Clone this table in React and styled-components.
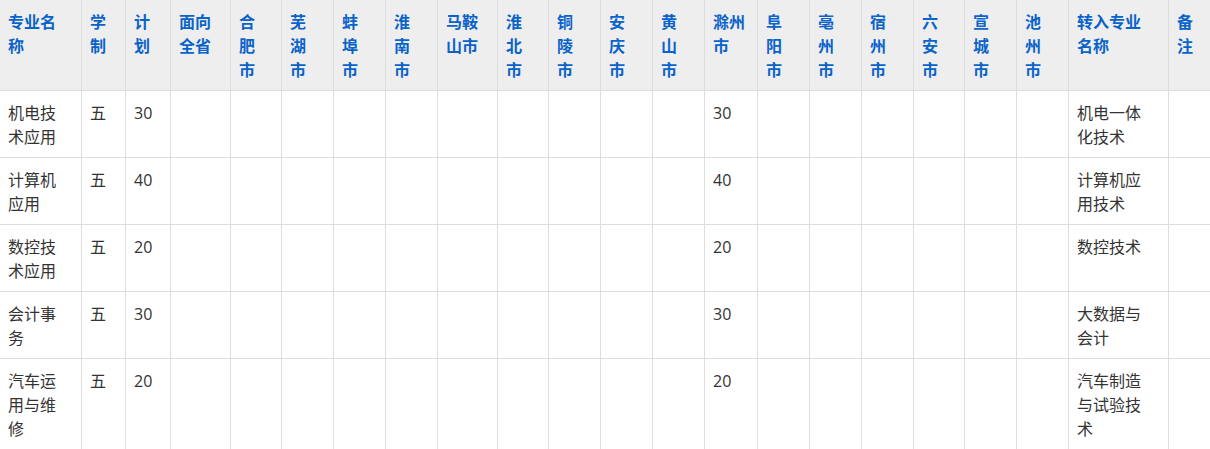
import React from "react";
import styled, { createGlobalStyle } from "styled-components";

const GlobalStyle = createGlobalStyle`
  html, body {
    margin: 0;
    padding: 0;
    background: #fff;
    overflow: hidden;
  }
  body {
    font-family: "Open Sans", "Noto Sans CJK SC", sans-serif;
  }
`;

const Wrapper = styled.div`
  width: 1210px;
  height: 449px;
  overflow: hidden;
`;

const Table = styled.table`
  border-collapse: collapse;
  table-layout: fixed;
  margin: -1px 0 0 -1px;
  font-size: 16px;
  line-height: 24px;
`;

const HeadCell = styled.th`
  background: #eeeeee;
  color: #0a63c9;
  font-weight: 700;
  text-align: left;
  vertical-align: top;
  padding: 10px 12px 8px 8px;
  border: 1px solid #dddddd;
  word-break: break-all;
`;

const Cell = styled.td`
  color: #333333;
  vertical-align: top;
  padding: 10px 12px 8px 8px;
  border: 1px solid #dddddd;
  word-break: break-all;
`;

const columns = [
  { title: "专业名称", width: 82 },
  { title: "学制", width: 44 },
  { title: "计划", width: 45 },
  { title: "面向全省", width: 60 },
  { title: "合肥市", width: 51 },
  { title: "芜湖市", width: 52 },
  { title: "蚌埠市", width: 52 },
  { title: "淮南市", width: 52 },
  { title: "马鞍山市", width: 60 },
  { title: "淮北市", width: 51 },
  { title: "铜陵市", width: 52 },
  { title: "安庆市", width: 52 },
  { title: "黄山市", width: 52 },
  { title: "滁州市", width: 53 },
  { title: "阜阳市", width: 52 },
  { title: "亳州市", width: 52 },
  { title: "宿州市", width: 52 },
  { title: "六安市", width: 51 },
  { title: "宣城市", width: 52 },
  { title: "池州市", width: 52 },
  { title: "转入专业名称", width: 100 },
  { title: "备注", width: 52 },
];

const rows = [
  { name: "机电技术应用", years: "五", plan: "30", target: "机电一体化技术" },
  { name: "计算机应用", years: "五", plan: "40", target: "计算机应用技术" },
  { name: "数控技术应用", years: "五", plan: "20", target: "数控技术" },
  { name: "会计事务", years: "五", plan: "30", target: "大数据与会计" },
  { name: "汽车运用与维修", years: "五", plan: "20", target: "汽车制造与试验技术" },
];

// 滁州 is column index 13
function rowCells(row) {
  const cells = columns.map(() => "");
  cells[0] = row.name;
  cells[1] = row.years;
  cells[2] = row.plan;
  cells[13] = row.plan;
  cells[20] = row.target;
  return cells;
}

export default function App() {
  const total = columns.reduce((s, c) => s + c.width, 0);
  return (
    <Wrapper>
      <GlobalStyle />
      <Table style={{ width: total }}>
        <colgroup>
          {columns.map((c) => (
            <col key={c.title} style={{ width: c.width }} />
          ))}
        </colgroup>
        <thead>
          <tr>
            {columns.map((c) => (
              <HeadCell key={c.title}>{c.title}</HeadCell>
            ))}
          </tr>
        </thead>
        <tbody>
          {rows.map((row) => (
            <tr key={row.name}>
              {rowCells(row).map((text, i) => (
                <Cell key={i}>{text}</Cell>
              ))}
            </tr>
          ))}
        </tbody>
      </Table>
    </Wrapper>
  );
}
